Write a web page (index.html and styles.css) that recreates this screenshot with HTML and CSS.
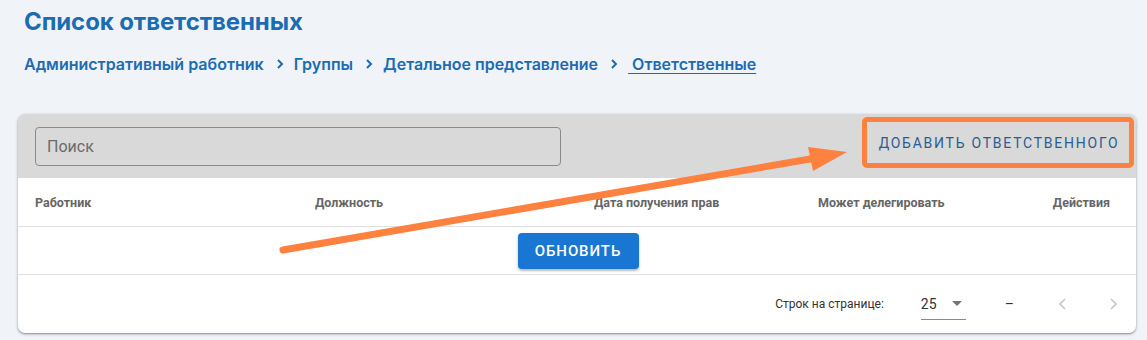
FILE: index.html
```html
<!DOCTYPE html>
<html lang="ru">
<head>
<meta charset="utf-8">
<link rel="stylesheet" href="styles.css">
</head>
<body>
<div class="page">
  <h1 class="title">Список ответственных</h1>
  <nav class="crumbs">
    <a class="crumb">Административный работник</a>
    <span class="sep"><svg width="10" height="12" viewBox="0 0 10 12"><path d="M3 2l4 4-4 4" fill="none" stroke="#1c6cb4" stroke-width="2"/></svg></span>
    <a class="crumb">Группы</a>
    <span class="sep"><svg width="10" height="12" viewBox="0 0 10 12"><path d="M3 2l4 4-4 4" fill="none" stroke="#1c6cb4" stroke-width="2"/></svg></span>
    <a class="crumb">Детальное представление</a>
    <span class="sep"><svg width="10" height="12" viewBox="0 0 10 12"><path d="M3 2l4 4-4 4" fill="none" stroke="#1c6cb4" stroke-width="2"/></svg></span>
    <a class="crumb current">&nbsp;Ответственные</a>
  </nav>
  <section class="card">
    <div class="toolbar">
      <div class="search">Поиск</div>
      <button class="add">ДОБАВИТЬ ОТВЕТСТВЕННОГО</button>
    </div>
    <div class="head">
      <span>Работник</span>
      <span>Должность</span>
      <span>Дата получения прав</span>
      <span>Может делегировать</span>
      <span class="right">Действия</span>
    </div>
    <div class="body-row">
      <button class="refresh">ОБНОВИТЬ</button>
    </div>
    <div class="footer">
      <span class="rows-label">Строк на странице:</span>
      <span class="select"><span>25</span><svg width="10" height="6" viewBox="0 0 10 6"><path d="M0 0h10L5 5z" fill="#757575"/></svg></span>
      <span class="range">–</span>
      <span class="nav"><svg width="10" height="14" viewBox="0 0 10 14"><path d="M7 2L2 7l5 5" fill="none" stroke="#c4c4c4" stroke-width="1.6"/></svg></span>
      <span class="nav"><svg width="10" height="14" viewBox="0 0 10 14"><path d="M3 2l5 5-5 5" fill="none" stroke="#c4c4c4" stroke-width="1.6"/></svg></span>
    </div>
  </section>
</div>
<svg class="arrow" width="1147" height="340" viewBox="0 0 1147 340">
  <line x1="283" y1="250" x2="816" y2="158" stroke="#ff8140" stroke-width="7" stroke-linecap="round"/>
  <polygon points="847,152 808,147 813,171" fill="#ff8140"/>
</svg>
</body>
</html>
```
FILE: styles.css
```css
html, body {
  margin: 0;
  padding: 0;
  background: #f0f4f8;
  width: 1147px;
  height: 340px;
  overflow: hidden;
}
.page {
  position: relative;
  padding: 0 11px 0 18px;
  font-family: Inter, "Noto Sans", sans-serif;
}
.title {
  margin: 0;
  padding: 6px 0 0 6px;
  height: 32px;
  font-size: 24px;
  line-height: 32px;
  font-weight: 700;
  color: #1c6cb4;
  letter-spacing: -0.1px;
}
.crumbs {
  display: flex;
  align-items: center;
  padding-left: 6px;
  margin-top: 14px;
  height: 24px;
  font-size: 16px;
  font-weight: 600;
  color: #1c6cb4;
}
.crumb { color: #1c6cb4; }
.crumb.current { text-decoration: underline; text-underline-offset: 3px; }
.sep {
  display: inline-flex;
  margin: 0 9px 0 11px;
}
.card {
  margin-top: 38px;
  background: #fff;
  border-radius: 7px;
  box-shadow: 0 1px 3px rgba(0,0,0,0.35), 0 1px 1px rgba(0,0,0,0.14);
  overflow: hidden;
  font-family: Roboto, "Liberation Sans", sans-serif;
}
.toolbar {
  display: flex;
  align-items: center;
  justify-content: space-between;
  height: 64px;
  background: #d9d9d9;
  padding: 0 2px 0 17px;
}
.search {
  box-sizing: border-box;
  width: 526px;
  height: 39px;
  border: 1px solid #8a8a8a;
  border-radius: 4px;
  padding: 0 11px;
  font-size: 16px;
  line-height: 37px;
  color: #6b6b6b;
}
.add {
  box-sizing: border-box;
  height: 51px;
  width: 272px;
  margin-top: -7px;
  border: 5px solid #ff8140;
  border-radius: 5px;
  background: transparent;
  padding: 0 0 0 2px;
  font-family: Roboto, "Liberation Sans", sans-serif;
  font-size: 14px;
  font-weight: 400;
  letter-spacing: 1.75px;
  color: #2c5c92;
}
.head {
  display: grid;
  grid-template-columns: 280px 279px 224px 1fr auto;
  align-items: center;
  height: 48px;
  padding: 0 26px 0 17px;
  font-size: 12.5px;
  font-weight: 700;
  color: #666;
  border-bottom: 1px solid #e0e0e0;
}
.body-row {
  display: flex;
  justify-content: center;
  align-items: center;
  height: 47px;
  border-bottom: 1px solid #e0e0e0;
}
.refresh {
  width: 121px;
  height: 36px;
  margin-left: 2px;
  border: none;
  border-radius: 4px;
  background: #1976d2;
  color: #fff;
  font-family: Roboto, "Liberation Sans", sans-serif;
  font-size: 15px;
  font-weight: 500;
  letter-spacing: 0.9px;
  box-shadow: 0 2px 2px rgba(0,0,0,0.2), 0 1px 4px rgba(0,0,0,0.12);
}
.footer {
  display: flex;
  align-items: center;
  justify-content: flex-end;
  height: 58px;
  padding-right: 18px;
  font-size: 12px;
  color: #333;
}
.rows-label { margin-right: 37px; }
.select {
  display: flex;
  align-items: center;
  gap: 15px;
  width: 45px;
  height: 30px;
  margin-top: 2px;
  border-bottom: 1px solid #8a8a8a;
  font-size: 14px;
  color: #333;
  box-sizing: border-box;
  padding-bottom: 2px;
}
.select svg { margin-top: 1px; }
.range { margin-left: 39px; margin-right: 44px; font-size: 14px; }
.nav { display: inline-flex; width: 10px; }
.nav + .nav { margin-left: 40px; }
.arrow {
  position: absolute;
  left: 0;
  top: 0;
  pointer-events: none;
}
```
